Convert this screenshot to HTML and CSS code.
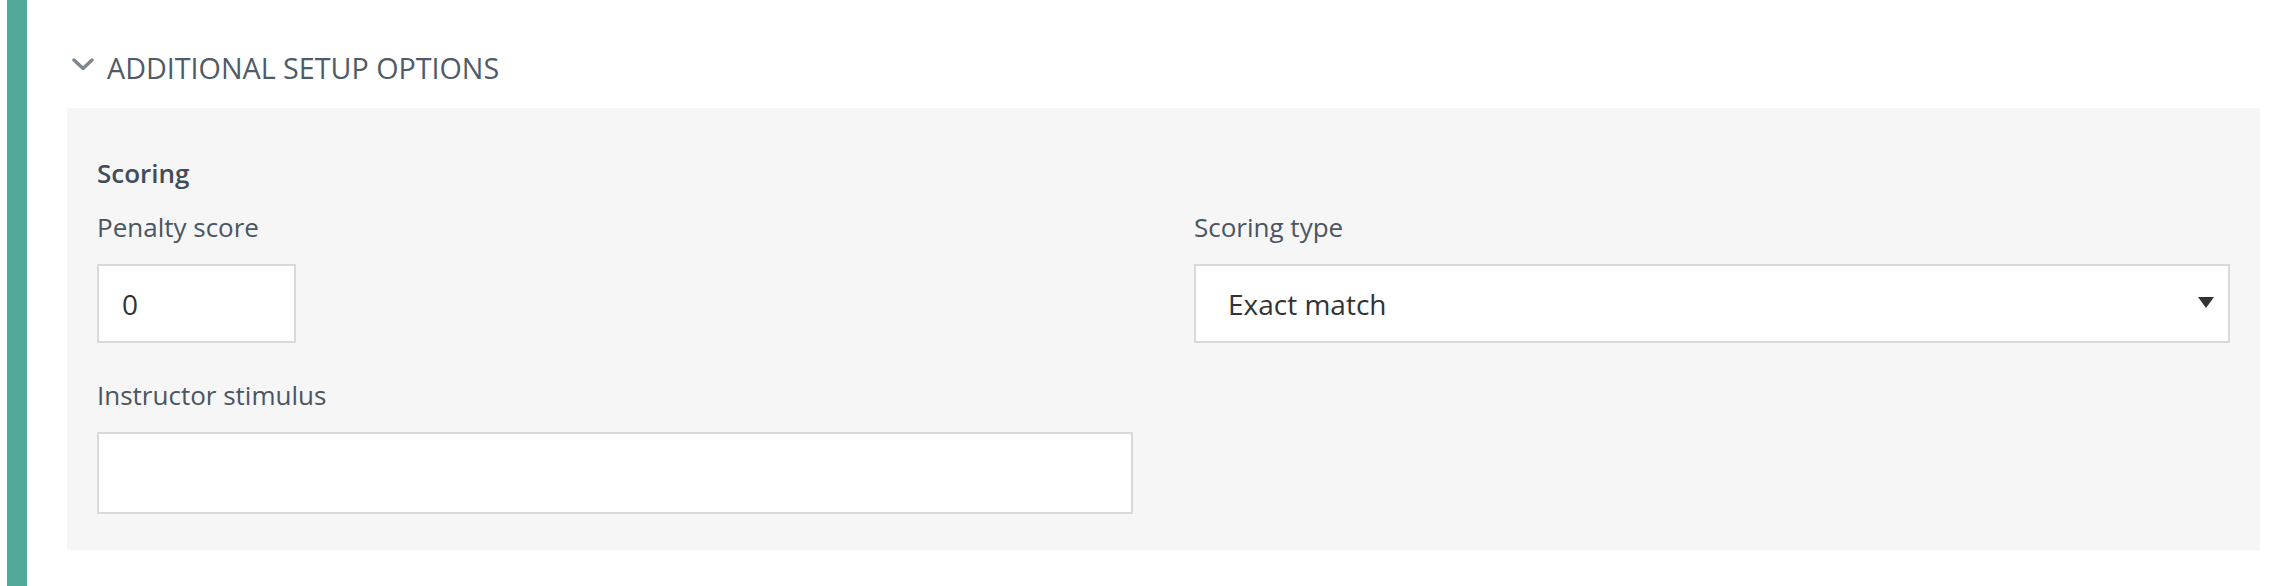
FILE: index.html
```html
<!DOCTYPE html>
<html lang="en">
<head>
<meta charset="utf-8">
<title>Additional setup options</title>
<link rel="stylesheet" href="styles.css">
</head>
<body>
<div class="card">
  <div class="section-head">
    <svg class="chevron" width="22" height="13" viewBox="0 0 22 13" aria-hidden="true">
      <path d="M2 2 L11 10.5 L20 2" fill="none" stroke="#7e868e" stroke-width="3.4" stroke-linecap="round" stroke-linejoin="round"/>
    </svg>
    <span class="section-title">ADDITIONAL SETUP OPTIONS</span>
  </div>
  <div class="panel">
    <div class="group-title">Scoring</div>
    <div class="grid">
      <div class="field">
        <label class="label">Penalty score</label>
        <div class="input small"><span class="value">0</span></div>
      </div>
      <div class="field">
        <label class="label">Scoring type</label>
        <div class="input select">
          <span class="value">Exact match</span>
          <svg class="caret" width="16" height="11" viewBox="0 0 16 11" aria-hidden="true">
            <path d="M0 0 H16 L8 11 Z" fill="#333"/>
          </svg>
        </div>
      </div>
      <div class="field">
        <label class="label">Instructor stimulus</label>
        <div class="input area"></div>
      </div>
    </div>
  </div>
</div>
</body>
</html>
```
FILE: styles.css
```css
html, body {
  margin: 0;
  padding: 0;
  background: #ffffff;
}
body {
  font-family: "Open Sans", "Noto Sans", sans-serif;
  color: #4a5562;
}
.card {
  margin-left: 7px;
  border-left: 20px solid #52a999;
  min-height: 586px;
  box-sizing: border-box;
  padding: 48px 18px 0 40px;
}
.section-head {
  display: flex;
  align-items: center;
  height: 40px;
  padding-left: 5px;
  margin-bottom: 20px;
}
.chevron {
  display: block;
  margin-top: -8px;
}
.section-title {
  margin-left: 13px;
  font-size: 28.7px;
  line-height: 40px;
  color: #4f5b68;
  letter-spacing: 0;
}
.panel {
  background: #f6f6f6;
  padding: 47px 30px 36px 30px;
}
.group-title {
  font-size: 26px;
  line-height: 36px;
  font-weight: 600;
  color: #414c59;
  margin-bottom: 19px;
}
.grid {
  display: grid;
  grid-template-columns: 1fr 1fr;
  column-gap: 61px;
  row-gap: 35px;
}
.field {
  display: flex;
  flex-direction: column;
  align-items: flex-start;
}
.label {
  font-size: 26px;
  line-height: 34px;
  color: #4a5562;
  margin-bottom: 20px;
}
.input {
  box-sizing: border-box;
  background: #ffffff;
  border: 2px solid #d9d9d9;
  height: 79px;
  display: flex;
  align-items: center;
}
.value {
  font-size: 28px;
  line-height: 38px;
  color: #333333;
}
.small {
  width: 199px;
  padding-left: 23px;
}
.select {
  align-self: stretch;
  justify-content: space-between;
  padding: 0 14px 0 32px;
}
.caret {
  display: block;
  margin-top: -3px;
}
.area {
  align-self: stretch;
  height: 82px;
}
```
